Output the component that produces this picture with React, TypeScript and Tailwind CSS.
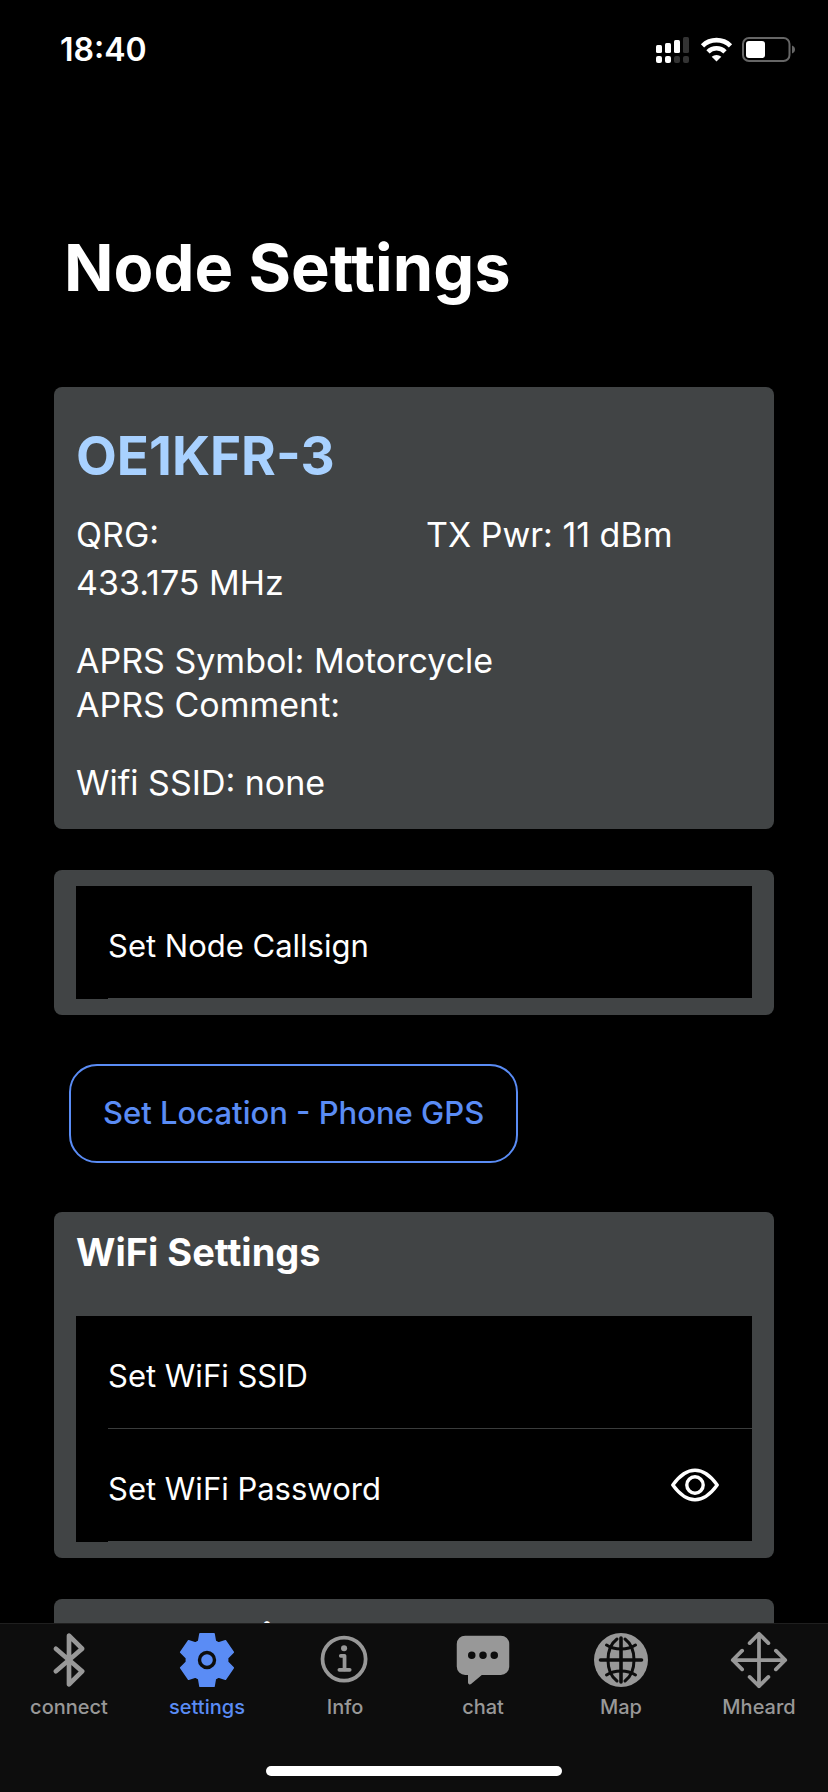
import { useState } from "react"
import type { ReactNode } from "react"
import { IoBluetooth, IoChatboxEllipses, IoInformationCircleOutline, IoMoveOutline } from "react-icons/io5"

const GearIcon = () => (
    <svg viewBox="-30 -30 60 60" className="w-[60px] h-[60px]" fill="currentColor">
        <path
            d="M-7 -26.300H7L8.300 -18.800L11.500 -17L18.400 -19.200L26.300 -7.800L20.600 -2V2L26.300 7.800L18.400 19.200L11.500 17L8.300 18.800L7 26.300H-7L-8.300 18.800L-11.500 17L-18.400 19.200L-26.300 7.800L-20.600 2V-2L-26.300 -7.800L-18.400 -19.200L-11.500 -17L-8.300 -18.800Z"
            stroke="currentColor"
            strokeWidth="1.600"
            strokeLinejoin="round"
        />
        <circle r="7.500" stroke="#0d0d0d" strokeWidth="3.400" />
    </svg>
)

const GlobeIcon = () => (
    <svg viewBox="0 0 60 60" className="w-[60px] h-[60px]" fill="none">
        <circle cx="30" cy="30" r="27" fill="#989898" />
        <g stroke="#0d0d0d" strokeWidth="3.600" strokeLinecap="round">
            <path d="M30 8v44" />
            <path d="M9.500 30h41" />
            <path d="M26 9c-12 9-12 33 0 42" strokeWidth="3" />
            <path d="M34 9c12 9 12 33 0 42" strokeWidth="3" />
            <path d="M15.500 15c8 5.300 21 5.300 29 0" strokeWidth="3" />
            <path d="M15.500 45c8-5.300 21-5.300 29 0" strokeWidth="3" />
        </g>
    </svg>
)

const EyeIcon = () => (
    <svg viewBox="0 0 48 34" className="w-12 h-[34px]" fill="none" stroke="currentColor" strokeWidth="3.400" strokeLinejoin="round">
        <path d="M1.800 17C6.500 10.500 14 2.300 24 2.300S41.500 10.500 46.200 17C41.500 23.500 34 31.700 24 31.700S6.500 23.500 1.800 17Z" />
        <circle cx="24" cy="17" r="8.200" />
    </svg>
)

const StatusIcons = () => (
    <svg viewBox="0 0 140 26" className="w-[140px] h-[26px]" fill="white">
        <rect x="0" y="8" width="6" height="8" rx="1.500" />
        <rect x="9" y="6" width="6" height="10" rx="1.500" />
        <rect x="18" y="3" width="6" height="13" rx="1.500" />
        <rect x="27" y="0" width="6" height="16" rx="1.500" fill="#333333" />
        <rect x="0" y="19" width="6" height="7" rx="2" />
        <rect x="9" y="19" width="6" height="7" rx="2" />
        <rect x="18" y="19" width="6" height="7" rx="2" fill="#333333" />
        <rect x="27" y="19" width="6" height="7" rx="2" fill="#333333" />
        <g fill="none" stroke="white" strokeWidth="4.600">
            <path d="M46.500 8.800a20 20 0 0 1 28 0" />
            <path d="M52 14.800a12 12 0 0 1 17 0" />
        </g>
        <path d="M60.500 24.500l-4.800-4.700a7 7 0 0 1 9.600 0z" />
        <rect x="87" y="1" width="46.500" height="23" rx="6" fill="none" stroke="#666666" strokeWidth="2" />
        <rect x="90" y="4" width="19" height="17" rx="3" />
        <path d="M136 8.500c4 1.300 4 6.700 0 8z" fill="#666666" />
    </svg>
)

const Card = ({ className = "", children }: { className?: string; children: ReactNode }) => (
    <section className={`w-full bg-[#414445] rounded-lg px-[22px] ${className}`}>{children}</section>
)

const Field = ({ id, label, type = "text", last = false, children }: { id: string; label: string; type?: string; last?: boolean; children?: ReactNode }) => (
    <div className="w-full pl-8 bg-black">
        <div className={`w-full h-[113px] flex items-center border-b pr-[33px] ${last ? "border-[#414445]" : "border-[#3a3c3c]"}`}>
            <label htmlFor={id} className="text-[31px] leading-10 pt-2">{label}</label>
            <input id={id} type={type} className="flex-1 min-w-0 h-10 bg-transparent outline-none text-[31px] px-2" />
            {children}
        </div>
    </div>
)

const tabs = [
    { name: "connect", icon: <IoBluetooth size={60} /> },
    { name: "settings", icon: <GearIcon />, active: true },
    { name: "Info", icon: <IoInformationCircleOutline size={60} /> },
    { name: "chat", icon: <IoChatboxEllipses size={60} /> },
    { name: "Map", icon: <GlobeIcon /> },
    { name: "Mheard", icon: <IoMoveOutline size={60} /> },
]

const App = () => {

    const [showPassword, setShowPassword] = useState(false)

    return (
        <div className="w-full h-screen flex flex-col bg-black text-white font-['Inter',sans-serif]">
            <header className="w-full flex justify-between items-center pl-[60px] pr-8 pt-7">
                <span className="text-[32px] leading-11 font-semibold">18:40</span>
                <StatusIcons />
            </header>
            <main className="w-full flex-1 min-h-0 overflow-hidden px-[54px] pt-39">
                <h1 className="text-[65px] leading-20 font-bold pl-2.5">Node Settings</h1>
                <Card className="mt-[79px] pt-[37px] pb-6">
                    <h2 className="text-[53px] leading-16 font-bold text-[#a8d1ff]">OE1KFR-3</h2>
                    <div className="grid grid-cols-2 gap-6 mt-[23px] text-[34px] leading-12">
                        <p>QRG:<br />433.175 MHz</p>
                        <p>TX Pwr: 11 dBm</p>
                    </div>
                    <div className="mt-8 text-[34px] leading-11">
                        <p>APRS Symbol: Motorcycle</p>
                        <p>APRS Comment:</p>
                        <p className="mt-[34px]">Wifi SSID: none</p>
                    </div>
                </Card>
                <Card className="mt-[41px] py-4">
                    <Field id="callsign" label="Set Node Callsign" last />
                </Card>
                <button type="button" className="block mt-[49px] ml-[15px] px-8 h-[99px] rounded-[28px] border-2 border-[#5a8cf5] text-[#5a8cf5] text-[31px] font-medium">
                    Set Location - Phone GPS
                </button>
                <Card className="mt-[49px] py-4">
                    <h2 className="text-[38px] leading-12 font-bold">WiFi Settings</h2>
                    <div className="w-full mt-10">
                        <Field id="ssid" label="Set WiFi SSID" />
                        <Field id="password" label="Set WiFi Password" type={showPassword ? "text" : "password"} last>
                            <button type="button" aria-label="Show password" onClick={() => setShowPassword(!showPassword)}>
                                <EyeIcon />
                            </button>
                        </Field>
                    </div>
                </Card>
                <Card className="mt-[41px] py-3.5">
                    <h2 className="text-[38px] leading-12 font-bold">APRS Settings</h2>
                </Card>
            </main>
            <footer className="w-full flex flex-col items-center bg-[#0d0d0d] border-t border-[#1f1f1f] pt-1.5 pb-4">
                <nav className="w-full grid grid-cols-6">
                    {tabs.map((tab) => (
                        <a key={tab.name} href={`#${tab.name}`} className={`flex flex-col items-center gap-[5px] text-xl leading-6 font-medium ${tab.active ? "text-[#5a8cf5]" : "text-[#989898]"}`}>
                            {tab.icon}
                            {tab.name}
                        </a>
                    ))}
                </nav>
                <div className="w-[296px] h-2.5 mt-[47px] rounded-full bg-white" />
            </footer>
        </div>
    )
}

export default App
